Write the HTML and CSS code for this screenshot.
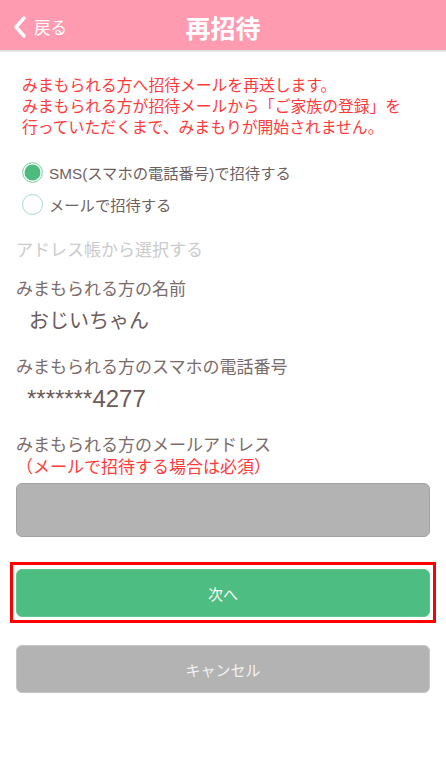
FILE: index.html
```html
<!DOCTYPE html>
<html lang="ja">
<head>
<meta charset="utf-8">
<title>再招待</title>
<link rel="stylesheet" href="styles.css">
</head>
<body>
<header class="nav">
  <div class="nav-back">
    <svg class="chev" width="14" height="22" viewBox="0 0 14 22"><polyline points="11,2 3,11 11,20" fill="none" stroke="#fff" stroke-width="3.4" stroke-linecap="round" stroke-linejoin="round"/></svg>
    <span>戻る</span>
  </div>
  <h1 class="nav-title">再招待</h1>
  <div></div>
</header>
<main class="content">
  <p class="notice">みまもられる方へ招待メールを再送します。<br>みまもられる方が招待メールから「ご家族の登録」を<br>行っていただくまで、みまもりが開始されません。</p>
  <div class="radios">
    <div class="radio-row"><span class="radio checked"></span><span>SMS(スマホの電話番号)で招待する</span></div>
    <div class="radio-row"><span class="radio"></span><span>メールで招待する</span></div>
  </div>
  <div class="address-book">アドレス帳から選択する</div>
  <div class="field">
    <div class="label">みまもられる方の名前</div>
    <div class="value">おじいちゃん</div>
  </div>
  <div class="field">
    <div class="label">みまもられる方のスマホの電話番号</div>
    <div class="value num">*******4277</div>
  </div>
  <div class="field">
    <div class="label">みまもられる方のメールアドレス</div>
    <div class="required">（メールで招待する場合は必須）</div>
    <div class="input"></div>
  </div>
  <div class="highlight">
    <div class="btn btn-next">次へ</div>
  </div>
  <div class="btn btn-cancel">キャンセル</div>
</main>
</body>
</html>
```
FILE: styles.css
```css
html, body {
  margin: 0;
  padding: 0;
  background: #fff;
}
body {
  width: 446px;
  font-family: "Liberation Sans", "Noto Sans CJK JP", sans-serif;
  color: #6e5f5f;
}
.nav {
  height: 50px;
  background: #ff9bb0;
  border-bottom: 2px solid #e3e3e3;
  display: grid;
  grid-template-columns: 1fr auto 1fr;
  align-items: center;
}
.nav-back {
  display: flex;
  align-items: center;
  padding-left: 13px;
  color: #fff;
  font-size: 16.5px;
  padding-top: 4px;
}
.chev {
  display: block;
  margin-right: 7px;
}
.nav-title {
  margin: 0;
  padding-top: 3px;
  font-size: 25px;
  font-weight: bold;
  color: #fff;
  font-family: "Noto Sans CJK JP", sans-serif;
}
.content {
  padding: 0 16px;
}
.notice {
  margin: 22px 0 0 6px;
  font-size: 15.8px;
  line-height: 21px;
  color: #ff3a3a;
  font-family: "Noto Sans CJK JP", sans-serif;
}
.radios {
  margin: 19px 0 0 6px;
}
.radio-row {
  height: 32px;
  display: flex;
  align-items: center;
  font-size: 15.3px;
  color: #6e5f5f;
}
.radio {
  box-sizing: border-box;
  width: 21px;
  height: 21px;
  border-radius: 50%;
  border: 1.5px solid #9fdfbd;
  margin-right: 6px;
  flex: none;
  background: #fff;
}
.radio.checked {
  background: #4cbb7d;
  box-shadow: inset 0 0 0 1.5px #fff;
}
.address-book {
  margin-top: 19px;
  font-size: 17px;
  line-height: 24px;
  color: #cbcbcb;
}
.field {
  margin-top: 15px;
}
.field + .field {
  margin-top: 20px;
}
.label {
  font-size: 17px;
  line-height: 24px;
  color: #7a6b6b;
}
.value {
  margin-top: 4px;
  padding-left: 13px;
  font-size: 20px;
  line-height: 30px;
  color: #6b5b5b;
}
.value.num {
  padding-left: 11px;
  font-size: 24px;
}
.required {
  font-size: 17px;
  line-height: 20px;
  color: #ff3a3a;
}
.input {
  box-sizing: border-box;
  margin-top: 5px;
  height: 54px;
  background: #b3b3b3;
  border: 1px solid #a2a2a2;
  border-radius: 6px;
}
.highlight {
  margin: 25px -6px 0;
  border: 3px solid #ff0000;
  padding: 4px 3px 3px;
}
.btn {
  box-sizing: border-box;
  height: 48px;
  border-radius: 6px;
  display: flex;
  align-items: center;
  justify-content: center;
  font-size: 15px;
  color: #fff;
}
.btn-next {
  background: #4dbd81;
  border: 1px solid #62c890;
}
.btn-cancel {
  margin-top: 22px;
  background: #b3b3b3;
  border: 1px solid #c4c4c4;
  color: #f2f2f2;
}
```
